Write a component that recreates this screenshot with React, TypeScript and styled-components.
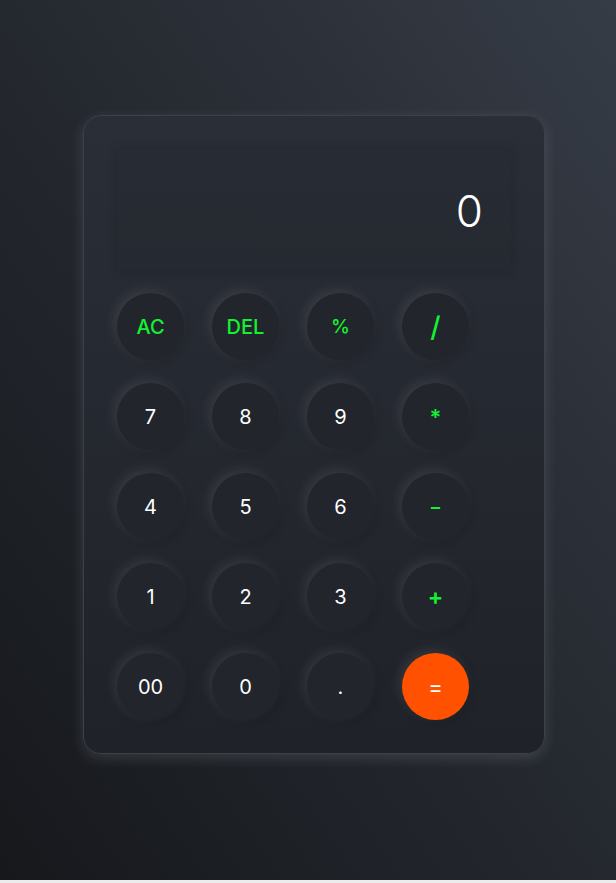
import React from 'react';
import styled, { createGlobalStyle } from 'styled-components';

const GlobalStyle = createGlobalStyle`
  * {
    box-sizing: border-box;
  }

  body {
    margin: 0;
    background: #ececec;
    font-family: Inter, "Open Sans", sans-serif;
  }
`;

const Page = styled.main`
  height: 880px;
  padding: 115px 0 0 83px;
  background: linear-gradient(to bottom left, #363c46 0%, #262a31 45%, #16181c 100%);
`;

const Card = styled.section`
  width: 462px;
  padding: 34px 33px 33px;
  border: 1px solid #3a414c;
  border-radius: 18px;
  background: linear-gradient(to bottom, #2a2e37, #1f2228);
  box-shadow: 0 4px 14px rgba(210, 210, 220, 0.16);
`;

const Display = styled.div`
  height: 121px;
  margin-bottom: 22px;
  padding-right: 28px;
  display: flex;
  align-items: center;
  justify-content: flex-end;
  background: rgba(0, 0, 0, 0.04);
  box-shadow: 0 0 10px rgba(0, 0, 0, 0.18);
  color: #ffffff;
  font-size: 44px;
  font-weight: 300;
`;

const Keys = styled.div`
  display: grid;
  grid-template-columns: repeat(4, 67px);
  grid-auto-rows: 67px;
  column-gap: 28px;
  row-gap: 23px;
`;

type Kind = 'num' | 'op' | 'equal';

const Key = styled.button<{ $kind: Kind; $size?: number; $bold?: boolean }>`
  width: 67px;
  height: 67px;
  padding: 0;
  border: none;
  border-radius: 50%;
  display: flex;
  align-items: center;
  justify-content: center;
  font-family: inherit;
  font-size: ${(p) => p.$size ?? 20}px;
  font-weight: ${(p) => (p.$bold ? 600 : p.$kind === 'op' ? 500 : 400)};
  color: ${(p) => (p.$kind === 'op' ? '#12f232' : '#ffffff')};
  background: ${(p) => (p.$kind === 'equal' ? '#ff5100' : '#22252c')};
  box-shadow: -3px -3px 12px rgba(255, 255, 255, 0.1), 2px 2px 10px rgba(0, 0, 0, 0.18);
  cursor: pointer;
`;

const keys: { label: string; kind: Kind; size?: number; bold?: boolean }[] = [
  { label: 'AC', kind: 'op' },
  { label: 'DEL', kind: 'op' },
  { label: '%', kind: 'op', size: 19 },
  { label: '/', kind: 'op', size: 28, bold: false },
  { label: '7', kind: 'num' },
  { label: '8', kind: 'num' },
  { label: '9', kind: 'num' },
  { label: '*', kind: 'op', size: 22, bold: true },
  { label: '4', kind: 'num' },
  { label: '5', kind: 'num' },
  { label: '6', kind: 'num' },
  { label: '–', kind: 'op', size: 18, bold: true },
  { label: '1', kind: 'num' },
  { label: '2', kind: 'num' },
  { label: '3', kind: 'num' },
  { label: '+', kind: 'op', size: 23, bold: true },
  { label: '00', kind: 'num' },
  { label: '0', kind: 'num' },
  { label: '.', kind: 'num' },
  { label: '=', kind: 'equal', size: 22 },
];

export default function App() {
  return (
    <>
      <GlobalStyle />
      <Page>
        <Card>
          <Display>0</Display>
          <Keys>
            {keys.map((k) => (
              <Key key={k.label} $kind={k.kind} $size={k.size} $bold={k.bold}>
                {k.label}
              </Key>
            ))}
          </Keys>
        </Card>
      </Page>
    </>
  );
}
